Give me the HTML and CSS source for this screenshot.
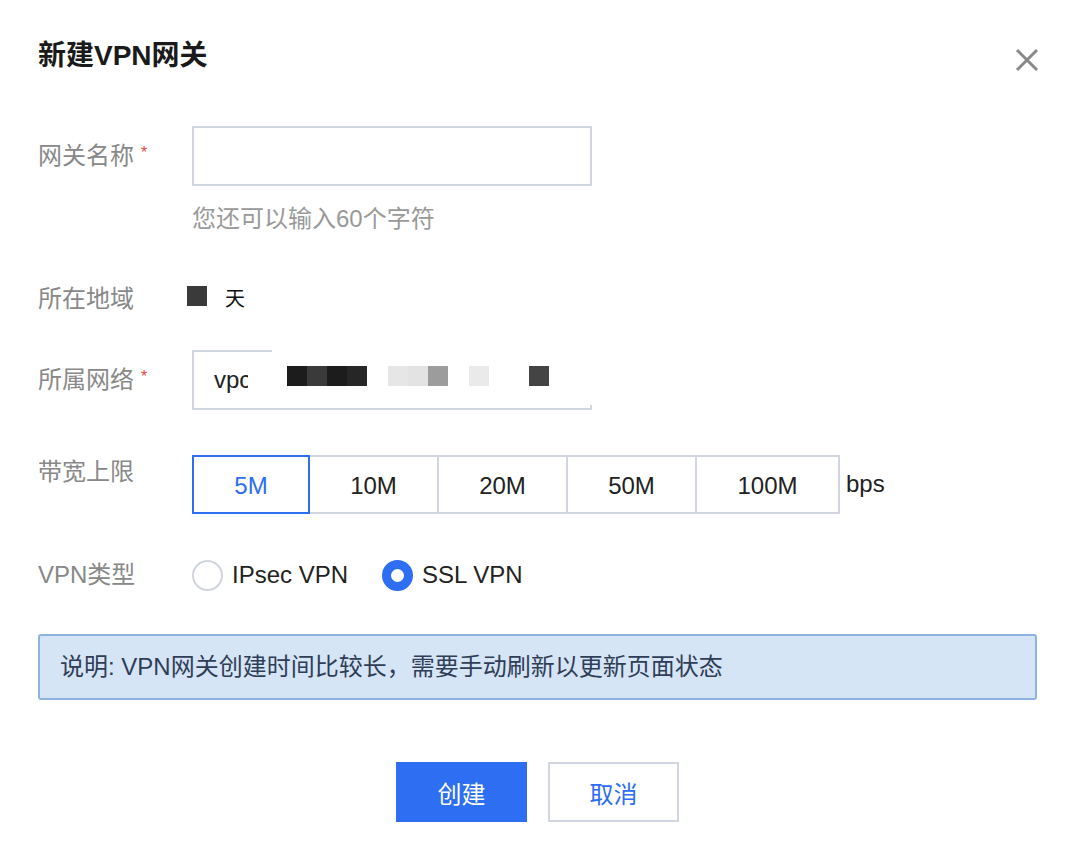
FILE: index.html
```html
<!DOCTYPE html>
<html lang="zh-CN">
<head>
<meta charset="utf-8">
<title>新建VPN网关</title>
<link rel="stylesheet" href="styles.css">
</head>
<body>
<div class="dialog">
  <div class="header">
    <h1 class="title">新建VPN网关</h1>
    <button class="close" aria-label="关闭">
      <svg width="26" height="26" viewBox="0 0 26 26"><path d="M3 3 L23 23 M23 3 L3 23" stroke="#888" stroke-width="3" fill="none"/></svg>
    </button>
  </div>

  <div class="row row-name">
    <div class="label">网关名称<span class="req">*</span></div>
    <div class="field">
      <div class="input"></div>
      <div class="help">您还可以输入60个字符</div>
    </div>
  </div>

  <div class="row row-region">
    <div class="label">所在地域</div>
    <div class="field region">
      <span class="mask-sq"></span><span class="cut-char">天</span>
    </div>
  </div>

  <div class="row row-net">
    <div class="label">所属网络<span class="req">*</span></div>
    <div class="field">
      <div class="input net">
        <span class="vpc">vpc</span>
        <div class="mosaic">
          <span class="b" style="background:#1c1c1c"></span><span class="b" style="background:#3a3a3a"></span><span class="b" style="background:#1c1c1c"></span><span class="b" style="background:#262626"></span><span class="gap"></span><span class="b" style="background:#e6e6e6"></span><span class="b" style="background:#e3e3e3"></span><span class="b" style="background:#9c9c9c"></span><span class="gap"></span><span class="b" style="background:#eaeaea"></span><span class="gap2"></span><span class="b" style="background:#444"></span>
        </div>
      </div>
    </div>
  </div>

  <div class="row row-bw">
    <div class="label">带宽上限</div>
    <div class="field seg-wrap">
      <div class="seg">
        <span class="seg-btn active w1">5M</span>
        <span class="seg-btn w2">10M</span>
        <span class="seg-btn w2">20M</span>
        <span class="seg-btn w2">50M</span>
        <span class="seg-btn w3">100M</span>
      </div>
      <span class="unit">bps</span>
    </div>
  </div>

  <div class="row row-type">
    <div class="label">VPN类型</div>
    <div class="field radios">
      <label class="radio"><span class="dot"></span>IPsec VPN</label>
      <label class="radio checked"><span class="dot"></span>SSL VPN</label>
    </div>
  </div>

  <div class="notice">说明: VPN网关创建时间比较长，需要手动刷新以更新页面状态</div>

  <div class="footer">
    <button class="btn primary">创建</button>
    <button class="btn">取消</button>
  </div>
</div>
</body>
</html>
```

FILE: styles.css
```css
* { box-sizing: border-box; }
html, body { margin: 0; padding: 0; background: #fff; }
body {
  font-family: "Liberation Sans", "Noto Sans CJK SC", sans-serif;
  color: #222;
  font-size: 24px;
}
.dialog {
  width: 1068px;
  padding: 38px 31px 0 38px;
}
.header {
  display: flex;
  justify-content: space-between;
  align-items: flex-start;
  height: 36px;
}
.title {
  margin: 0;
  font-size: 28px;
  line-height: 36px;
  font-weight: bold;
  color: #1a1a1a;
}
.close {
  border: 0;
  background: none;
  padding: 0;
  margin: 9px -3px 0 0;
  width: 26px;
  height: 26px;
  cursor: pointer;
}
.close svg { display: block; }

.row {
  display: flex;
  align-items: flex-start;
}
.label {
  width: 154px;
  flex: none;
  color: #888;
  font-size: 24px;
  line-height: 32px;
  display: flex;
  align-items: flex-start;
}
.req {
  color: #e54545;
  font-size: 16px;
  line-height: 16px;
  margin: 5px 0 0 7px;
}
.field { flex: none; }

.row-name { margin-top: 52px; }
.row-name .label { padding-top: 14px; }
.input {
  width: 400px;
  height: 60px;
  border: 2px solid #d1d5df;
  background: #fff;
}
.help {
  margin-top: 17px;
  color: #999;
  line-height: 32px;
}

.row-region { margin-top: 48px; }
.region {
  display: flex;
  align-items: flex-start;
  height: 32px;
}
.mask-sq {
  width: 20px;
  height: 20px;
  background: #3a3a3a;
  margin: 3px 0 0 -5px;
}
.cut-char {
  margin-left: 18px;
  font-size: 20px;
  line-height: 32px;
  color: #111;
}

.row-net { margin-top: 35px; }
.row-net .label { padding-top: 14px; }
.input.net {
  position: relative;
  display: flex;
  align-items: center;
  padding-left: 20px;
}
.vpc { color: #222; line-height: 32px; }
.mosaic {
  position: absolute;
  left: 54px;
  top: -2px;
  right: -2px;
  bottom: 3px;
  background: #fff;
  clip-path: polygon(0 2px, 24px 2px, 24px 0, 100% 0, 100% 100%, 0 100%);
  display: flex;
  align-items: flex-start;
  padding: 16px 0 0 39px;
}
.mosaic .b { width: 20px; height: 20px; flex: none; }
.mosaic .gap { width: 21px; flex: none; }
.mosaic .gap2 { width: 40px; flex: none; }

.row-bw { margin-top: 45px; }
.row-bw .label { padding-top: 1px; }
.seg-wrap {
  display: flex;
  align-items: center;
}
.seg { display: flex; }
.seg-btn {
  height: 59px;
  border: 2px solid #d1d5df;
  display: flex;
  align-items: center;
  justify-content: center;
  color: #222;
  background: #fff;
  margin-left: -2px;
  padding-top: 2px;
}
.seg-btn:first-child { margin-left: 0; }
.seg-btn.w1 { width: 118px; }
.seg-btn.w2 { width: 131px; }
.seg-btn.w3 { width: 145px; }
.seg-btn.active {
  border-color: #2d6ef2;
  color: #2d6ef2;
  position: relative;
  z-index: 1;
}
.unit {
  margin-left: 6px;
  margin-top: -2px;
  color: #222;
}

.row-type { margin-top: 45px; }
.row-type .label { padding-top: 0; }
.radios {
  display: flex;
  align-items: center;
  height: 32px;
}
.radio {
  display: flex;
  align-items: center;
  color: #222;
  line-height: 32px;
  margin-right: 34px;
}
.dot {
  width: 31px;
  height: 31px;
  border-radius: 50%;
  border: 2px solid #d1d5df;
  background: #fff;
  margin-right: 9px;
}
.radio.checked .dot {
  border: 9px solid #2d6ef2;
}

.notice {
  margin-top: 43px;
  height: 66px;
  border: 2px solid #8db4e0;
  border-radius: 3px;
  background: #d6e5f6;
  color: #2f3d56;
  display: flex;
  align-items: center;
  padding-left: 20px;
  line-height: 32px;
}

.footer {
  margin-top: 62px;
  display: flex;
  justify-content: center;
  gap: 21px;
}
.btn {
  width: 131px;
  height: 60px;
  border: 2px solid #d1d5df;
  background: #fff;
  color: #2d6ef2;
  font-family: inherit;
  font-size: 24px;
  padding: 0;
}
.btn.primary {
  background: #2d6ef2;
  border-color: #2d6ef2;
  color: #fff;
}
```
